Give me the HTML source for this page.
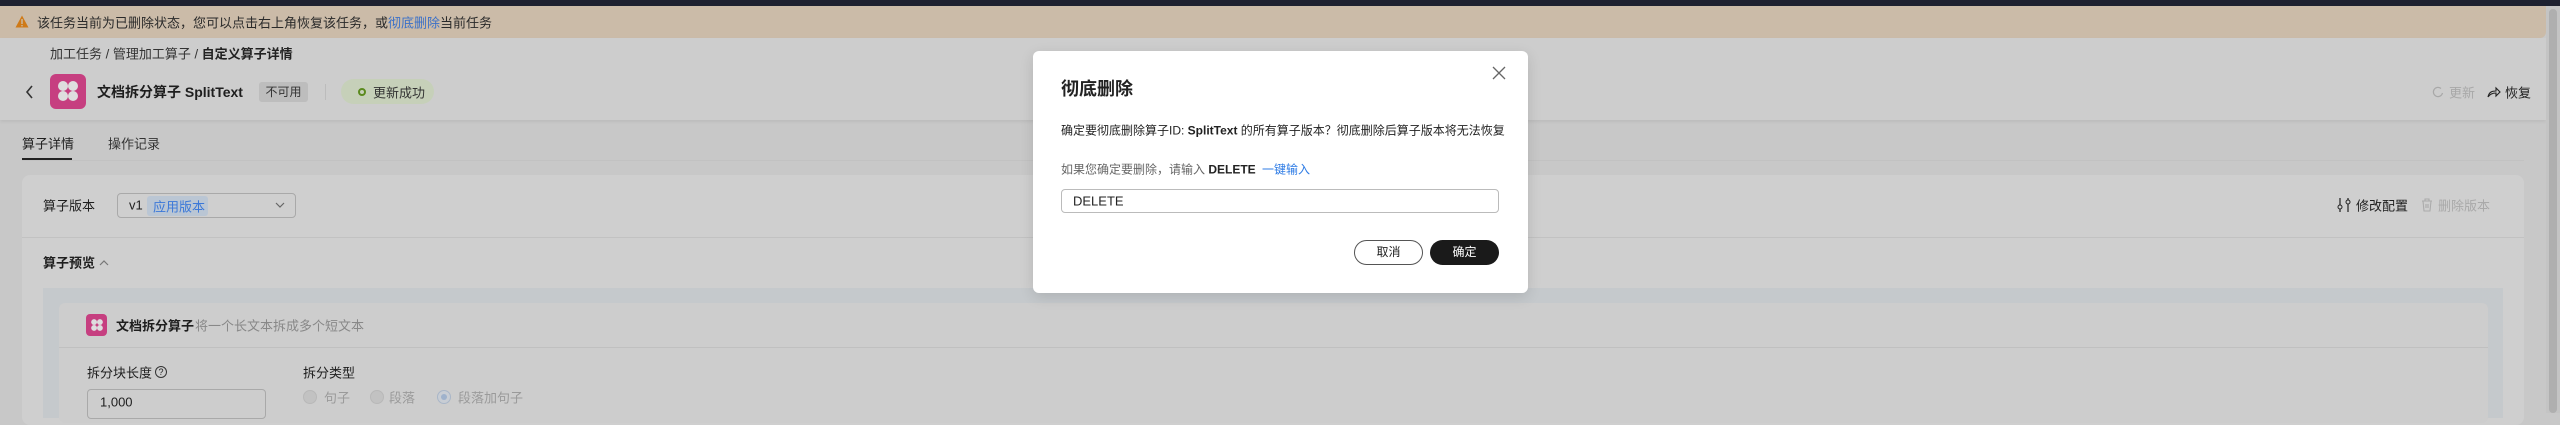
<!DOCTYPE html>
<html><head><meta charset="utf-8"><style>
*{margin:0;padding:0;box-sizing:border-box}
body{width:2560px;height:413px;overflow:hidden;background:#c8c8c8;font-family:"Liberation Sans","Noto Sans CJK SC",sans-serif;font-size:13px;color:#1e1e1e;position:relative}
.a{position:absolute;white-space:nowrap}
.v{transform:translateY(-50%)}
</style></head><body>
<div class="a" style="left:0;top:0;width:2560px;height:6px;background:#1e2130"></div>
<div class="a" style="left:0;top:6px;width:2546px;height:32px;background:#cbbba8;border-radius:0 0 6px 0"></div>
<svg class="a" style="left:15px;top:15px" width="14" height="13" viewBox="0 0 14 13"><path d="M7 0.5L13.5 12.5H0.5Z" fill="#cf7a18"/><rect x="6.3" y="4" width="1.4" height="5" fill="#cbbba8"/><rect x="6.3" y="10" width="1.4" height="1.4" fill="#cbbba8"/></svg>
<div class="a v" style="left:37px;top:22px;color:#2a2a2a">该任务当前为已删除状态，您可以点击右上角恢复该任务，或<span style="color:#3a70c8">彻底删除</span>当前任务</div>
<div class="a" style="left:0;top:38px;width:2546px;height:82px;background:#cdcdcd;box-shadow:0 2px 3px rgba(0,0,0,.06)"></div>
<div class="a v" style="left:50px;top:53px;color:#333">加工任务 / 管理加工算子 / <b style="color:#222">自定义算子详情</b></div>
<svg class="a" style="left:25px;top:85px" width="10" height="14" viewBox="0 0 10 14"><path d="M7 1L2 7L7 13" stroke="#333" stroke-width="1.6" fill="none"/></svg>
<div class="a" style="left:50px;top:74px;width:36px;height:35px;background:#c63f80;border-radius:6px"></div>
<svg class="a" style="left:56px;top:79px" width="24" height="24" viewBox="0 0 24 24" fill="#dedede"><circle cx="7" cy="7" r="5"/><circle cx="17" cy="7" r="5"/><circle cx="7" cy="17" r="5"/><circle cx="17" cy="17" r="5"/></svg>
<div class="a v" style="left:97px;top:92px;font-size:14px;font-weight:bold">文档拆分算子 SplitText</div>
<div class="a" style="left:259px;top:82px;width:49px;height:20px;background:#bdbdbd;border-radius:3px;text-align:center;line-height:20px;font-size:12px;color:#333">不可用</div>
<div class="a" style="left:325px;top:84px;width:1px;height:16px;background:#bcbcbc"></div>
<div class="a" style="left:341px;top:79px;width:93px;height:25px;background:#c6d0b9;border-radius:13px"></div>
<div class="a" style="left:358px;top:88px;width:8px;height:8px;border:2px solid #5b8a1e;border-radius:50%"></div>
<div class="a v" style="left:373px;top:92px;color:#333">更新成功</div>
<svg class="a" style="left:2432px;top:86px" width="12" height="12" viewBox="0 0 12 12"><path d="M10.5 7A4.6 4.6 0 1 1 9 2.5" stroke="#a8a8a8" stroke-width="1.2" fill="none"/></svg>
<div class="a v" style="left:2449px;top:92px;color:#a8a8a8">更新</div>
<svg class="a" style="left:2487px;top:86px" width="14" height="12" viewBox="0 0 14 12"><path d="M1 11C2 6 5 5 9 5V2L13 6L9 10V7C6 7 3 8 1 11Z" stroke="#222" stroke-width="1.1" fill="none"/></svg>
<div class="a v" style="left:2505px;top:92px">恢复</div>
<div class="a" style="left:2546px;top:6px;width:14px;height:407px;background:#c4c4c4"></div>
<div class="a" style="left:2549px;top:9px;width:8px;height:404px;background:#afafaf;border-radius:4px"></div>
<div class="a v" style="left:22px;top:143px;font-size:13px">算子详情</div>
<div class="a v" style="left:108px;top:143px;font-size:13px;color:#333">操作记录</div>
<div class="a" style="left:22px;top:160px;width:2502px;height:1px;background:#c2c2c2"></div>
<div class="a" style="left:22px;top:158px;width:50px;height:2px;background:#222"></div>
<div class="a" style="left:22px;top:175px;width:2502px;height:250px;background:#cfcfcf;border-radius:8px"></div>
<div class="a v" style="left:43px;top:205px">算子版本</div>
<div class="a" style="left:117px;top:193px;width:179px;height:25px;border:1px solid #a9a9a9;border-radius:4px"></div>
<div class="a v" style="left:129px;top:205px">v1</div>
<div class="a" style="left:147px;top:196px;width:61px;height:20px;background:#bac6d4;border-radius:3px"></div>
<div class="a v" style="left:153px;top:206px;color:#3b78d8">应用版本</div>
<svg class="a" style="left:275px;top:202px" width="10" height="6" viewBox="0 0 10 6"><path d="M1 1L5 5L9 1" stroke="#666" stroke-width="1.2" fill="none"/></svg>
<svg class="a" style="left:2337px;top:198px" width="14" height="14" viewBox="0 0 14 14"><path d="M3 0V14M11 0V14" stroke="#222" stroke-width="1.2"/><circle cx="3" cy="9" r="2" fill="#cfcfcf" stroke="#222"/><circle cx="11" cy="4" r="2" fill="#cfcfcf" stroke="#222"/></svg>
<div class="a v" style="left:2356px;top:205px">修改配置</div>
<svg class="a" style="left:2421px;top:198px" width="12" height="14" viewBox="0 0 12 14"><path d="M1 3H11M4 3V1H8V3M2 3L3 13H9L10 3M5 6V10M7 6V10" stroke="#ababab" stroke-width="1.1" fill="none"/></svg>
<div class="a v" style="left:2438px;top:205px;color:#a9a9a9">删除版本</div>
<div class="a" style="left:22px;top:237px;width:2502px;height:1px;background:#c2c2c2"></div>
<div class="a v" style="left:43px;top:262px;font-weight:bold">算子预览</div>
<svg class="a" style="left:99px;top:260px" width="10" height="6" viewBox="0 0 10 6"><path d="M1 5L5 1L9 5" stroke="#777" stroke-width="1.2" fill="none"/></svg>
<div class="a" style="left:43px;top:288px;width:2460px;height:130px;background:#c5c9cc"></div>
<div class="a" style="left:59px;top:303px;width:2429px;height:120px;background:#cdcdcd;border-radius:6px"></div>
<div class="a" style="left:86px;top:314px;width:21px;height:22px;background:#c63f80;border-radius:4px"></div>
<svg class="a" style="left:90px;top:318px" width="14" height="14" viewBox="0 0 24 24" fill="#dedede"><circle cx="7" cy="7" r="5"/><circle cx="17" cy="7" r="5"/><circle cx="7" cy="17" r="5"/><circle cx="17" cy="17" r="5"/></svg>
<div class="a v" style="left:116px;top:325px;font-weight:bold">文档拆分算子</div>
<div class="a v" style="left:195px;top:325px;color:#888">将一个长文本拆成多个短文本</div>
<div class="a" style="left:59px;top:347px;width:2429px;height:1px;background:#c0c0c0"></div>
<div class="a v" style="left:87px;top:372px">拆分块长度</div>
<div class="a" style="left:155px;top:366px;width:12px;height:12px;border:1px solid #333;border-radius:50%;font-size:9px;text-align:center;line-height:10px">?</div>
<div class="a v" style="left:303px;top:372px">拆分类型</div>
<div class="a" style="left:87px;top:389px;width:179px;height:30px;border:1px solid #a9a9a9;border-radius:4px"></div>
<div class="a v" style="left:100px;top:402px">1,000</div>
<div class="a" style="left:303px;top:390px;width:14px;height:14px;border-radius:50%;background:#c2c2c2;border:1px solid #b8b8b8"></div>
<div class="a v" style="left:324px;top:397px;color:#9a9a9a">句子</div>
<div class="a" style="left:370px;top:390px;width:14px;height:14px;border-radius:50%;background:#c2c2c2;border:1px solid #b8b8b8"></div>
<div class="a v" style="left:389px;top:397px;color:#9a9a9a">段落</div>
<div class="a" style="left:437px;top:390px;width:14px;height:14px;border-radius:50%;background:#c8cdd4;border:1px solid #a9b6c8"></div>
<div class="a" style="left:441px;top:394px;width:6px;height:6px;border-radius:50%;background:#9fb2cc"></div>
<div class="a v" style="left:458px;top:397px;color:#9a9a9a">段落加句子</div>

<div class="a" style="left:1033px;top:51px;width:495px;height:242px;background:#fff;border-radius:6px;box-shadow:0 4px 14px rgba(0,0,0,.12)"></div>
<div class="a v" style="left:1061px;top:88px;font-size:18px;font-weight:bold;color:#222">彻底删除</div>
<svg class="a" style="left:1492px;top:66px" width="14" height="14" viewBox="0 0 14 14"><path d="M1 1L13 13M13 1L1 13" stroke="#666" stroke-width="1.3"/></svg>
<div class="a v" style="left:1061px;top:130px;font-size:12px;color:#222">确定要彻底删除算子ID: <b>SplitText</b> 的所有算子版本？彻底删除后算子版本将无法恢复</div>
<div class="a v" style="left:1061px;top:169px;font-size:12px;color:#666">如果您确定要删除，请输入 <b style="color:#222">DELETE</b></div>
<div class="a v" style="left:1262px;top:169px;font-size:12px;color:#2d7be5">一键输入</div>
<div class="a" style="left:1061px;top:189px;width:438px;height:24px;border:1px solid #bbb;border-radius:4px"></div>
<div class="a v" style="left:1073px;top:201px;font-size:13px;color:#222">DELETE</div>
<div class="a" style="left:1354px;top:240px;width:69px;height:25px;border:1px solid #555;border-radius:13px;text-align:center;line-height:23px;font-size:12px;color:#222">取消</div>
<div class="a" style="left:1430px;top:240px;width:69px;height:25px;background:#1a1a1a;border-radius:13px;text-align:center;line-height:25px;font-size:12px;color:#fff">确定</div>
</body></html>
